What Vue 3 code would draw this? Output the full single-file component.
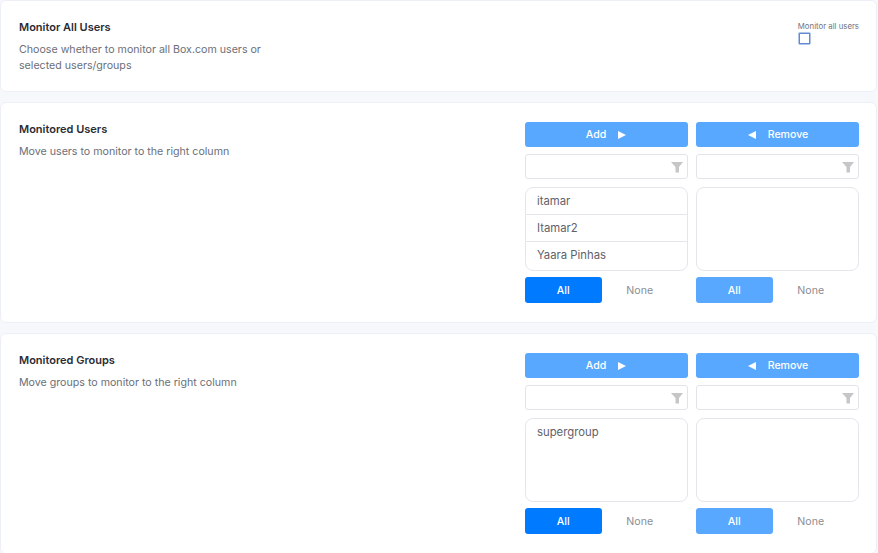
<script setup>
const sections = [
  {
    title: 'Monitored Users',
    text: 'Move users to monitor to the right column',
    items: ['itamar', 'Itamar2', 'Yaara Pinhas']
  },
  {
    title: 'Monitored Groups',
    text: 'Move groups to monitor to the right column',
    items: ['supergroup']
  }
]
</script>

<template>
  <div class="page">
    <section class="card top-card">
      <div class="info">
        <h2>Monitor All Users</h2>
        <p>Choose whether to monitor all Box.com users or<br />selected users/groups</p>
      </div>
      <label class="monitor-all">
        <span>Monitor all users</span>
        <i class="check"></i>
      </label>
    </section>

    <section v-for="s in sections" :key="s.title" class="card">
      <div class="info">
        <h2>{{ s.title }}</h2>
        <p>{{ s.text }}</p>
      </div>
      <div class="picker">
        <div class="col">
          <button class="move add">Add <span class="arrow right"></span></button>
          <div class="filter">
            <svg viewBox="0 0 12 12" width="12" height="12"><path d="M0 1h12L8 6v5.5H4.5V6z" /></svg>
          </div>
          <ul class="list">
            <li v-for="item in s.items" :key="item">{{ item }}</li>
          </ul>
          <div class="actions">
            <button class="all strong">All</button>
            <button class="none">None</button>
          </div>
        </div>
        <div class="col">
          <button class="move remove"><span class="arrow left"></span> Remove</button>
          <div class="filter">
            <svg viewBox="0 0 12 12" width="12" height="12"><path d="M0 1h12L8 6v5.5H4.5V6z" /></svg>
          </div>
          <ul class="list"></ul>
          <div class="actions">
            <button class="all">All</button>
            <button class="none">None</button>
          </div>
        </div>
      </div>
    </section>
  </div>
</template>

<style scoped>
.page {
  width: 878px;
  height: 553px;
  overflow: hidden;
  background: #f7f8fc;
  font-family: Inter, "Liberation Sans", sans-serif;
  display: flex;
  flex-direction: column;
  gap: 10px;
}
.card {
  flex: none;
  box-sizing: border-box;
  display: flex;
  justify-content: space-between;
  background: #fff;
  border: 1px solid #edeff7;
  border-radius: 6px;
  padding: 19px 17px 19px 18px;
  margin-right: 1px;
}
.top-card {
  height: 92px;
}
h2 {
  margin: 0;
  font-size: 11px;
  font-weight: 600;
  line-height: 14px;
  color: #2a2c35;
}
p {
  margin: 8px 0 0;
  font-size: 10.65px;
  line-height: 16px;
  color: #6c6f78;
}
.monitor-all {
  display: flex;
  flex-direction: column;
  align-items: flex-start;
  font-size: 7.8px;
  line-height: 10px;
  color: #6f7480;
  margin-top: 1px;
}
.check {
  width: 9px;
  height: 9px;
  margin: 1.5px 0 0 1.5px;
  border: 1px solid #6489d4;
  border-radius: 0.5px;
  box-shadow: 0 0 0 0.5px #6489d4;
}
.picker {
  display: flex;
  gap: 8px;
}
.col {
  width: 163px;
  display: flex;
  flex-direction: column;
}
button {
  font-family: inherit;
  border: 0;
  padding: 0;
  font-size: 10.6px;
  font-weight: 500;
}
.move {
  box-sizing: border-box;
  height: 25px;
  background: #59a8ff;
  color: #fff;
  border-radius: 3px;
  display: flex;
  align-items: center;
  justify-content: center;
  gap: 12px;
}
.move.add {
  padding-right: 1px;
}
.move.remove {
  padding-left: 1px;
}
.arrow {
  width: 0;
  height: 0;
  border-top: 4px solid transparent;
  border-bottom: 4px solid transparent;
}
.arrow.right {
  border-left: 8px solid #fff;
}
.arrow.left {
  border-right: 8px solid #fff;
}
.filter {
  box-sizing: border-box;
  height: 25px;
  margin-top: 7px;
  border: 1px solid #e2e4ea;
  border-radius: 3px;
  background: #fff;
  display: flex;
  align-items: center;
  justify-content: flex-end;
  padding-right: 4px;
}
.filter svg {
  fill: #c6c6c6;
}
.list {
  box-sizing: border-box;
  height: 84px;
  margin: 8px 0 0;
  padding: 0;
  list-style: none;
  border: 1px solid #e4e6eb;
  border-radius: 8px;
  overflow: hidden;
}
.list li {
  box-sizing: border-box;
  height: 27px;
  padding: 0 11px;
  line-height: 26px;
  font-size: 11.3px;
  color: #5f6168;
  border-bottom: 1px solid #e4e6eb;
}
.list li:last-child {
  border-bottom: 0;
}
.actions {
  display: flex;
  margin-top: 6px;
}
.actions button {
  width: 76.5px;
  height: 26px;
  border-radius: 3px;
}
.all {
  background: #59a8ff;
  color: #fff;
}
.all.strong {
  background: #007bff;
}
.actions .none {
  background: transparent;
  color: #8b8d92;
  font-weight: 400;
}
</style>

<style>
html, body {
  margin: 0;
  background: #f7f8fc;
}
</style>
